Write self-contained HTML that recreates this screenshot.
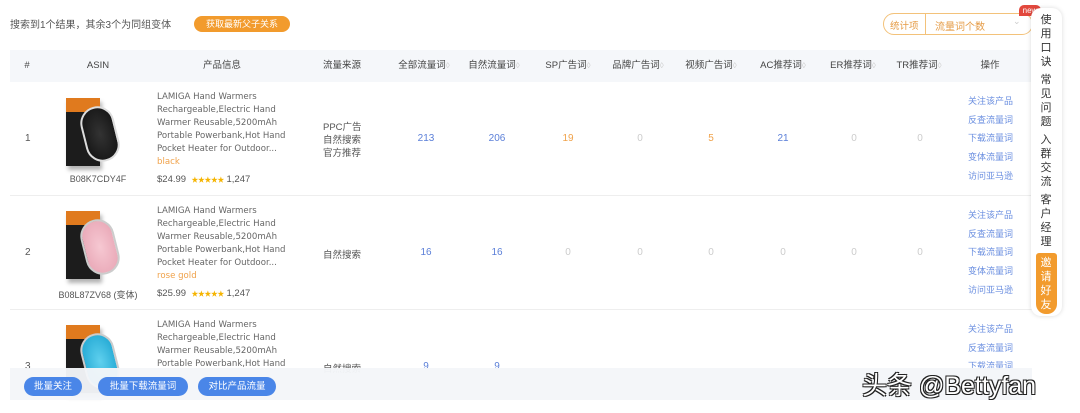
<!DOCTYPE html>
<html><head><meta charset="utf-8"><style>
*{margin:0;padding:0;box-sizing:border-box}
body{width:1080px;height:413px;overflow:hidden;background:#fff;font-family:"Liberation Sans","Noto Sans CJK SC",sans-serif;font-size:10px;color:#555;position:relative}
.a{position:absolute;white-space:nowrap}
.c{transform:translateX(-50%)}
.hdr{position:absolute;left:10px;top:50px;width:1022px;height:32px;background:#f5f7fa}
.h{position:absolute;top:60px;height:12px;line-height:12px;font-size:9.5px;color:#444;transform:translateX(-50%);white-space:nowrap}
.h i{font-style:normal;color:#ccc;font-size:8px;line-height:12px;vertical-align:top}
.line{position:absolute;left:10px;width:1022px;height:1px;background:#eee}
.t{position:absolute;left:157px;font-family:"DejaVu Sans",sans-serif;font-size:8.6px;line-height:13px;color:#666;white-space:nowrap}
.blue{color:#5b7fd8}.or{color:#f0a24a}.gr{color:#ccc}
.op{position:absolute;left:968px;font-size:9px;line-height:18.7px;color:#6b8fe0}
.img{position:absolute;left:63px;width:62px;height:72px}
.box{position:absolute;left:3px;top:2px;width:34px;height:68px;background:#1c1c1c;border-top:14px solid #e07a1e;box-shadow:2px 4px 4px rgba(0,0,0,.3)}
.dev{position:absolute;left:20px;top:10px;width:34px;height:56px;border-radius:17px;transform:rotate(-14deg);border:2px solid #ccc}
.btn{position:absolute;top:377px;height:19px;border-radius:10px;background:#4a86e8;color:#fff;font-size:9.5px;line-height:19px;text-align:center}
.side{position:absolute;left:1031px;top:8px;width:31px;height:308px;background:#fff;border-radius:10px;box-shadow:0 0 5px rgba(0,0,0,.15)}
.sv{position:absolute;left:1035px;width:22px;text-align:center;font-size:11px;line-height:14px;color:#333;white-space:nowrap}
.stars{color:#f5b400;font-size:7px;letter-spacing:-.5px}
</style></head><body>
<div class="a" style="left:10px;top:16px;font-size:10px;color:#555">搜索到1个结果，其余3个为同组变体</div>
<div class="a" style="left:194px;top:16px;width:96px;height:16px;border-radius:8px;background:#f29b2d;color:#fff;font-size:9px;line-height:16px;text-align:center">获取最新父子关系</div>
<div class="a" style="left:883px;top:13px;width:150px;height:22px;border:1px solid #f3c27a;border-radius:11px"></div>
<div class="a" style="left:925px;top:14px;width:1px;height:20px;background:#f3c27a"></div>
<div class="a" style="left:890px;top:18px;font-size:9.5px;color:#e59b45">统计项</div>
<div class="a" style="left:935px;top:18px;font-size:10px;color:#e59b45">流量词个数</div>
<div class="a" style="left:1013px;top:16px;font-size:9px;color:#ccc">⌄</div>
<div class="a" style="left:1019px;top:5px;width:22px;height:11px;background:#e2483d;border-radius:5px 5px 5px 0;color:#fff;font-size:8px;line-height:11px;text-align:center">new</div>

<div class="hdr"></div>
<div class="h" style="left:27px">#</div>
<div class="h" style="left:98px">ASIN</div>
<div class="h" style="left:222px">产品信息</div>
<div class="h" style="left:342px">流量来源</div>
<div class="h" style="left:424px">全部流量词<i>◊</i></div>
<div class="h" style="left:494px">自然流量词<i>◊</i></div>
<div class="h" style="left:568px">SP广告词<i>◊</i></div>
<div class="h" style="left:638px">品牌广告词<i>◊</i></div>
<div class="h" style="left:711px">视频广告词<i>◊</i></div>
<div class="h" style="left:783px">AC推荐词<i>◊</i></div>
<div class="h" style="left:853px">ER推荐词<i>◊</i></div>
<div class="h" style="left:919px">TR推荐词<i>◊</i></div>
<div class="h" style="left:990px">操作</div>

<!-- row 1 -->
<div class="a" style="left:25px;top:133px">1</div>
<div class="img" style="top:96px"><div class="box"></div><div class="dev" style="background:radial-gradient(#333,#111);border-color:#ddd"></div></div>
<div class="a c" style="left:98px;top:174px;font-size:9px">B08K7CDY4F</div>
<div class="t" style="top:91px">LAMIGA Hand Warmers<br>Rechargeable,Electric Hand<br>Warmer Reusable,5200mAh<br>Portable Powerbank,Hot Hand<br>Pocket Heater for Outdoor...<br><span class="or">black</span></div>
<div class="a" style="left:157px;top:174px;font-size:9.5px;color:#555">$24.99 &nbsp;<span class="stars">★★★★★</span> 1,247</div>
<div class="a" style="left:323px;top:121px;font-size:9.5px;line-height:13px;white-space:normal;width:45px">PPC广告<br>自然搜索<br>官方推荐</div>
<div class="a c blue" style="left:426px;top:133px">213</div>
<div class="a c blue" style="left:497px;top:133px">206</div>
<div class="a c or" style="left:568px;top:133px">19</div>
<div class="a c gr" style="left:640px;top:133px">0</div>
<div class="a c or" style="left:711px;top:133px">5</div>
<div class="a c blue" style="left:783px;top:133px">21</div>
<div class="a c gr" style="left:854px;top:133px">0</div>
<div class="a c gr" style="left:920px;top:133px">0</div>
<div class="op" style="top:92px">关注该产品<br>反查流量词<br>下载流量词<br>变体流量词<br>访问亚马逊</div>
<div class="line" style="top:195px"></div>

<!-- row 2 -->
<div class="a" style="left:25px;top:247px">2</div>
<div class="img" style="top:209px"><div class="box"></div><div class="dev" style="background:radial-gradient(#f6c8d2,#e7a3b3)"></div></div>
<div class="a c" style="left:98px;top:288px;font-size:9px">B08L87ZV68 (变体)</div>
<div class="t" style="top:205px">LAMIGA Hand Warmers<br>Rechargeable,Electric Hand<br>Warmer Reusable,5200mAh<br>Portable Powerbank,Hot Hand<br>Pocket Heater for Outdoor...<br><span class="or">rose gold</span></div>
<div class="a" style="left:157px;top:288px;font-size:9.5px;color:#555">$25.99 &nbsp;<span class="stars">★★★★★</span> 1,247</div>
<div class="a" style="left:323px;top:247px;font-size:9.5px">自然搜索</div>
<div class="a c blue" style="left:426px;top:247px">16</div>
<div class="a c blue" style="left:497px;top:247px">16</div>
<div class="a c gr" style="left:568px;top:247px">0</div>
<div class="a c gr" style="left:640px;top:247px">0</div>
<div class="a c gr" style="left:711px;top:247px">0</div>
<div class="a c gr" style="left:783px;top:247px">0</div>
<div class="a c gr" style="left:854px;top:247px">0</div>
<div class="a c gr" style="left:920px;top:247px">0</div>
<div class="op" style="top:206px">关注该产品<br>反查流量词<br>下载流量词<br>变体流量词<br>访问亚马逊</div>
<div class="line" style="top:309px"></div>

<!-- row 3 -->
<div class="a" style="left:25px;top:361px">3</div>
<div class="img" style="top:323px"><div class="box"></div><div class="dev" style="background:radial-gradient(#5fd0ee,#1aa3d0)"></div></div>
<div class="t" style="top:319px">LAMIGA Hand Warmers<br>Rechargeable,Electric Hand<br>Warmer Reusable,5200mAh<br>Portable Powerbank,Hot Hand</div>
<div class="a" style="left:323px;top:361px;font-size:9.5px">自然搜索</div>
<div class="a c blue" style="left:426px;top:361px">9</div>
<div class="a c blue" style="left:497px;top:361px">9</div>
<div class="op" style="top:320px">关注该产品<br>反查流量词<br>下载流量词</div>

<!-- bottom bar -->
<div class="a" style="left:10px;top:368px;width:1022px;height:32px;background:rgba(244,246,249,.96)"></div>
<div class="btn" style="left:24px;width:58px">批量关注</div>
<div class="btn" style="left:98px;width:90px">批量下载流量词</div>
<div class="btn" style="left:198px;width:78px">对比产品流量</div>

<!-- sidebar -->
<div class="side"></div>
<div class="sv" style="top:13px">使<br>用<br>口<br>诀</div>
<div class="sv" style="top:73px">常<br>见<br>问<br>题</div>
<div class="sv" style="top:133px">入<br>群<br>交<br>流</div>
<div class="sv" style="top:193px">客<br>户<br>经<br>理</div>
<div class="a" style="left:1036px;top:253px;width:21px;height:61px;background:#f29b2d;border-radius:3px 3px 10px 10px"></div>
<div class="sv" style="top:256px;color:#fff">邀<br>请<br>好<br>友</div>

<div class="a" style="left:862px;top:366px;font-size:25px;color:#fff;font-family:'Liberation Sans','Noto Sans CJK SC',sans-serif;text-shadow:-1px -1px 0 #222,1px -1px 0 #222,-1px 1px 0 #222,1px 1px 0 #222">头条 @Bettyfan</div>
</body></html>
